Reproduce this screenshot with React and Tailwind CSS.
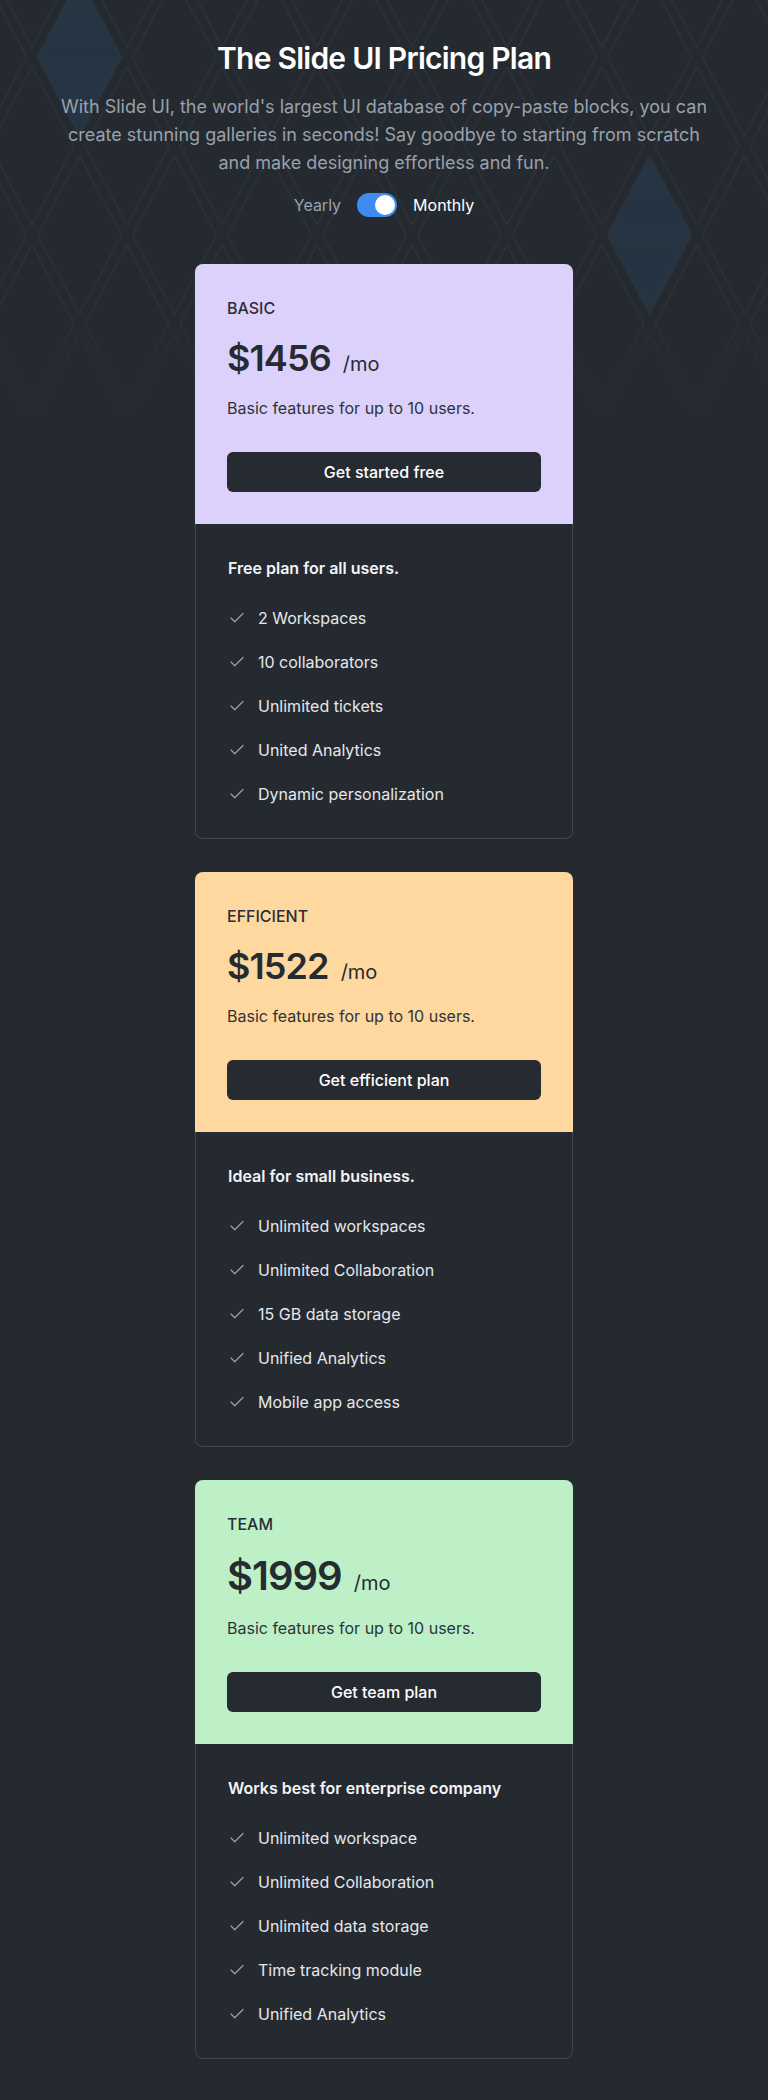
import React from "react";

const plans = [
  {
    name: "BASIC",
    price: "$1456",
    bg: "bg-[#dcd1fa]",
    big: false,
    cta: "Get started free",
    heading: "Free plan for all users.",
    features: ["2 Workspaces", "10 collaborators", "Unlimited tickets", "United Analytics", "Dynamic personalization"],
  },
  {
    name: "EFFICIENT",
    price: "$1522",
    bg: "bg-[#fed89f]",
    big: false,
    cta: "Get efficient plan",
    heading: "Ideal for small business.",
    features: ["Unlimited workspaces", "Unlimited Collaboration", "15 GB data storage", "Unified Analytics", "Mobile app access"],
  },
  {
    name: "TEAM",
    price: "$1999",
    bg: "bg-[#bdf0c7]",
    big: true,
    cta: "Get team plan",
    heading: "Works best for enterprise company",
    features: ["Unlimited workspace", "Unlimited Collaboration", "Unlimited data storage", "Time tracking module", "Unified Analytics"],
  },
];

function Diamond({ cx, cy, ...rest }) {
  const pts = `${cx},${cy - 79} ${cx + 42},${cy} ${cx},${cy + 79} ${cx - 42},${cy}`;
  return <polygon points={pts} {...rest} />;
}

function Background() {
  return (
    <svg className="absolute left-0 top-0 w-[768px] h-[430px]" width="768" height="430" viewBox="0 0 768 430">
      <defs>
        <pattern id="dia" patternUnits="userSpaceOnUse" x="-15.5" y="57" width="95" height="178">
          <Diamond cx={47.5} cy={89} fill="none" stroke="#323840" strokeWidth="1" />
          <Diamond cx={0} cy={0} fill="none" stroke="#323840" strokeWidth="1" />
          <Diamond cx={95} cy={0} fill="none" stroke="#323840" strokeWidth="1" />
          <Diamond cx={0} cy={178} fill="none" stroke="#323840" strokeWidth="1" />
          <Diamond cx={95} cy={178} fill="none" stroke="#323840" strokeWidth="1" />
        </pattern>
        <linearGradient id="fade" x1="0" y1="0" x2="0" y2="1">
          <stop offset="0" stopColor="#fff" stopOpacity="1" />
          <stop offset="0.7" stopColor="#fff" stopOpacity="0.9" />
          <stop offset="1" stopColor="#fff" stopOpacity="0" />
        </linearGradient>
        <mask id="m">
          <rect x="0" y="0" width="768" height="430" fill="url(#fade)" />
        </mask>
      </defs>
      <g mask="url(#m)">
        <Diamond cx={79.5} cy={57} fill="#263544" />
        <Diamond cx={649.5} cy={235} fill="#263544" />
        <rect x="0" y="0" width="768" height="430" fill="url(#dia)" />
      </g>
    </svg>
  );
}

function Check() {
  return (
    <svg width="18" height="18" viewBox="0 0 24 24" fill="none" stroke="#9ca3af" strokeWidth="1.6" strokeLinecap="round" strokeLinejoin="round" className="shrink-0">
      <path d="M20 6 9 17l-5-5" />
    </svg>
  );
}

function Card({ plan }) {
  return (
    <div className="w-[378px] flex flex-col">
      <div className={`${plan.bg} rounded-t-lg p-8 flex flex-col`}>
        <div className="text-base leading-6 font-medium text-[#2a2e37]">{plan.name}</div>
        <div className="mt-[18px] flex items-baseline gap-3 text-[#262b32]">
          <span className={plan.big ? "text-[40px] leading-[44px] font-semibold tracking-tight" : "text-4xl leading-10 font-semibold tracking-tight"}>
            {plan.price}
          </span>
          <span className="text-xl font-normal">/mo</span>
        </div>
        <p className="mt-[18px] text-base leading-6 text-[#2e333b]">Basic features for up to 10 users.</p>
        <button className="mt-8 h-10 w-full rounded-md bg-[#262b32] text-white text-base font-medium">{plan.cta}</button>
      </div>
      <div className="border border-t-0 border-[#40464f] rounded-b-lg px-8 pt-8 pb-8">
        <div className="text-base leading-6 font-semibold text-[#f3f4f6]">{plan.heading}</div>
        <ul className="mt-[26px] flex flex-col gap-5">
          {plan.features.map((f) => (
            <li key={f} className="flex items-center gap-3 text-base leading-6 text-[#e5e7eb]">
              <Check />
              <span>{f}</span>
            </li>
          ))}
        </ul>
      </div>
    </div>
  );
}

export default function App() {
  return (
    <div className="relative min-h-[2100px] bg-[#252a31] overflow-hidden font-[Inter,sans-serif]">
      <Background />
      <div className="relative flex flex-col items-center pt-10 pb-10">
        <h1 className="text-3xl font-semibold tracking-tight text-white">The Slide UI Pricing Plan</h1>
        <p className="mt-[17px] max-w-[656px] text-center text-lg text-[#9aa1ab]">
          With Slide UI, the world's largest UI database of copy-paste blocks, you can create stunning galleries in seconds! Say goodbye to starting from scratch and make designing effortless and fun.
        </p>
        <div className="mt-4 flex items-center gap-4">
          <span className="text-base leading-6 text-[#9ca3af]">Yearly</span>
          <div className="w-10 h-6 rounded-full bg-[#3f8cf0] flex items-center justify-end p-[2px]">
            <div className="w-5 h-5 rounded-full bg-white" />
          </div>
          <span className="text-base leading-6 text-white">Monthly</span>
        </div>
        <div className="mt-[47px] flex flex-col gap-[33px]">
          {plans.map((p) => (
            <Card key={p.name} plan={p} />
          ))}
        </div>
      </div>
    </div>
  );
}
